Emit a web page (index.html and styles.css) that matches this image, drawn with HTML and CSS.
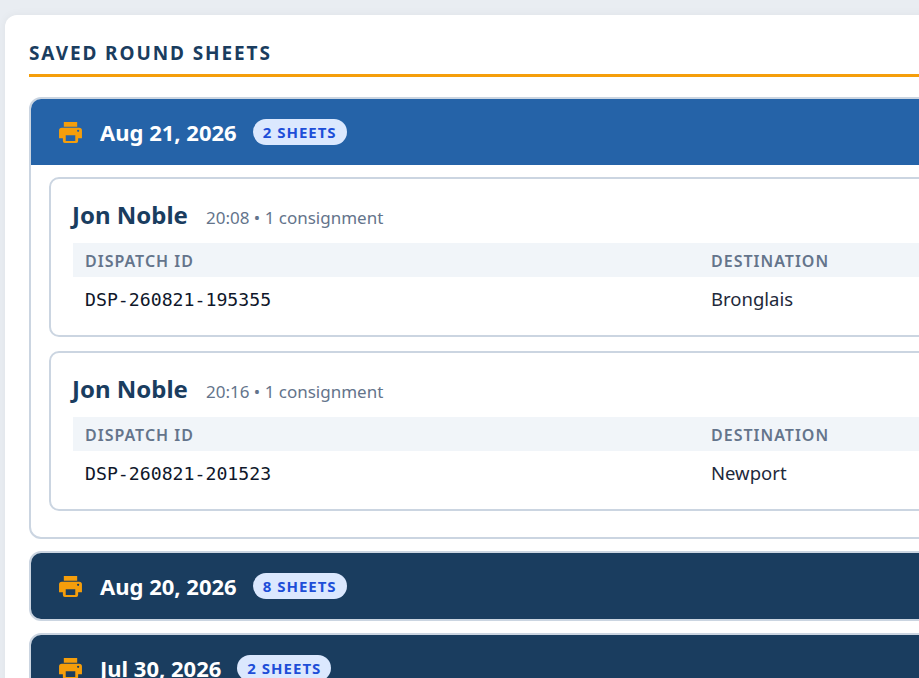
FILE: index.html
```html
<!DOCTYPE html>
<html lang="en">
<head>
  <meta charset="UTF-8">
  <meta name="viewport" content="width=device-width, initial-scale=1.0">
  <title>Saved Round Sheets</title>
  <link rel="stylesheet" href="styles.css">
</head>
<body>
  <svg class="icon-defs" width="0" height="0">
    <symbol id="printer" viewBox="0 0 24 22">
      <path d="M5 0h14v5H5z"/>
      <path fill-rule="evenodd" d="M3 6h18a3 3 0 0 1 3 3v8h-4v3a2 2 0 0 1-2 2H6a2 2 0 0 1-2-2v-3H0V9a3 3 0 0 1 3-3zm4 8v6h10v-6zm13-6a1.200 1.200 0 1 0 0 2.400a1.200 1.200 0 0 0 0-2.400z"/>
    </symbol>
  </svg>
  <div class="panel">
    <h2 class="panel-title">SAVED ROUND SHEETS</h2>

    <div class="day-group">
      <div class="day-header day-header-open">
        <svg class="day-icon"><use href="#printer"></use></svg>
        <span class="day-date">Aug 21, 2026</span>
        <span class="day-badge">2 SHEETS</span>
      </div>
      <div class="day-body">
        <div class="sheet">
          <div class="sheet-head">
            <span class="sheet-name">Jon Noble</span>
            <span class="sheet-meta">20:08 • 1 consignment</span>
          </div>
          <table class="sheet-table">
            <thead>
              <tr><th class="col-id">DISPATCH ID</th><th>DESTINATION</th></tr>
            </thead>
            <tbody>
              <tr><td class="mono">DSP-260821-195355</td><td>Bronglais</td></tr>
            </tbody>
          </table>
        </div>
        <div class="sheet">
          <div class="sheet-head">
            <span class="sheet-name">Jon Noble</span>
            <span class="sheet-meta">20:16 • 1 consignment</span>
          </div>
          <table class="sheet-table">
            <thead>
              <tr><th class="col-id">DISPATCH ID</th><th>DESTINATION</th></tr>
            </thead>
            <tbody>
              <tr><td class="mono">DSP-260821-201523</td><td>Newport</td></tr>
            </tbody>
          </table>
        </div>
      </div>
    </div>

    <div class="day-group">
      <div class="day-header">
        <svg class="day-icon"><use href="#printer"></use></svg>
        <span class="day-date">Aug 20, 2026</span>
        <span class="day-badge">8 SHEETS</span>
      </div>
    </div>

    <div class="day-group">
      <div class="day-header">
        <svg class="day-icon"><use href="#printer"></use></svg>
        <span class="day-date">Jul 30, 2026</span>
        <span class="day-badge">2 SHEETS</span>
      </div>
    </div>
  </div>
</body>
</html>
```

FILE: styles.css
```css
html, body {
  height: 100%;
  overflow: hidden;
}
body {
  font-family: "Noto Sans", "Open Sans", sans-serif;
  margin: 0;
  padding: 15px 0 0 5px;
  background: #e9edf2;
  box-sizing: border-box;
}
.icon-defs {
  position: absolute;
}
.panel {
  width: 1200px;
  background: white;
  border-radius: 12px 0 0 0;
  padding: 25px 24px 24px;
  box-sizing: border-box;
  box-shadow: 0 0 10px rgba(0,0,0,0.05);
}
.panel-title {
  margin: 0 0 20px;
  padding-bottom: 8px;
  border-bottom: 3px solid #f59e0b;
  color: #1a3d5f;
  font-size: 19px;
  font-weight: 700;
  line-height: 26px;
  letter-spacing: 1.9px;
}
.day-group {
  border: 2px solid #cbd5e1;
  border-radius: 12px;
  margin-bottom: 12px;
  overflow: hidden;
}
.day-header {
  display: flex;
  align-items: center;
  height: 66px;
  padding-left: 28px;
  background: #1a3d5f;
  color: white;
}
.day-header-open {
  background: #2563a8;
}
.day-icon {
  width: 23px;
  height: 21px;
  margin-right: 18px;
  fill: #f59e0b;
}
.day-date {
  font-size: 22px;
  font-weight: 700;
  margin-right: 16px;
}
.day-badge {
  background: #dbe8fe;
  color: #1d4ed8;
  border-radius: 13px;
  padding: 0 10px;
  font-size: 15px;
  font-weight: 700;
  line-height: 26px;
  letter-spacing: 1px;
}
.day-body {
  padding: 12px 18px 26px;
}
.sheet {
  border: 2px solid #cbd5e1;
  border-radius: 10px;
  padding: 19px 22px 16px 21px;
  margin-bottom: 14px;
}
.sheet:last-child {
  margin-bottom: 0;
}
.sheet-head {
  display: flex;
  align-items: baseline;
  margin-bottom: 11px;
  height: 34px;
}
.sheet-name {
  color: #1a3d5f;
  font-size: 24px;
  font-weight: 700;
  margin-right: 18px;
}
.sheet-meta {
  color: #64748b;
  font-size: 17px;
}
.sheet-table {
  width: calc(100% - 1px);
  margin-left: 1px;
  border-collapse: collapse;
}
.sheet-table th {
  background: #f1f5f9;
  color: #64748b;
  font-size: 16px;
  font-weight: 600;
  text-align: left;
  letter-spacing: 1px;
  padding: 2px 12px 0;
  height: 34px;
  box-sizing: border-box;
}
.sheet-table .col-id {
  width: 626px;
}
.sheet-table td {
  color: #1e293b;
  font-size: 18.500px;
  padding: 0 12px;
  height: 42px;
}
.sheet-table .mono {
  font-family: "DejaVu Sans Mono", "Liberation Mono", monospace;
  font-size: 18.200px;
  color: #0f172a;
  padding-top: 2px;
  box-sizing: border-box;
}
```
